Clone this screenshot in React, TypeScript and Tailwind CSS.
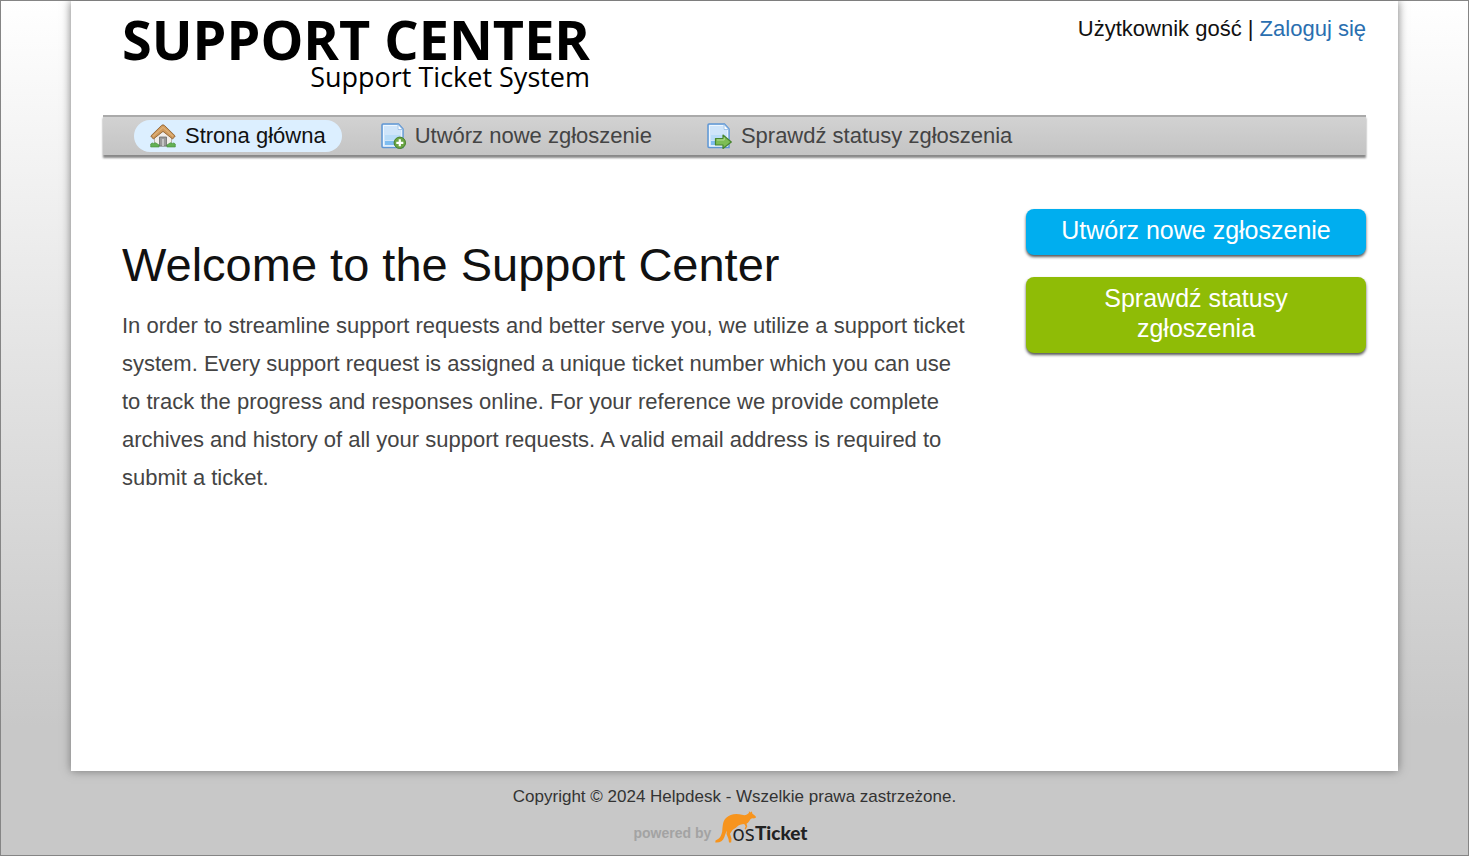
import type { ReactNode } from "react";

function IconHome() {
  return (
    <svg viewBox="0 0 26 24" className="h-6 w-[26px] shrink-0" aria-hidden="true">
      <path d="M4.500 11.500 13 4l8.500 7.500V22h-17z" fill="#f1eeea" stroke="#a9a39a" strokeWidth=".8" />
      <path d="M9.500 22v-9h7v9z" fill="#9a9a9a" stroke="#6c6c6c" strokeWidth=".8" />
      <path d="M12 22v-7h2v7z" fill="#c4c4c4" />
      <path d="M.8 12 11.600 1.400q1.400-1.100 2.800 0L25.200 12l-2.600 3L13 7.400 3.400 15z" fill="#cf9a5c" stroke="#8f6232" strokeWidth=".9" strokeLinejoin="round" />
      <path d="M3 12.200 13 3.200l10 9" fill="none" stroke="#dfb27a" strokeWidth="1.200" />
      <path d="M.7 23v-3q1.500-1.800 3-.6 1.700-1.400 3.400.3l2 1.300V23z" fill="#63b053" stroke="#3f8a38" strokeWidth=".6" />
      <path d="M25.300 23v-3q-1.500-1.800-3-.6-1.700-1.400-3.400.3l-2 1.300V23z" fill="#63b053" stroke="#3f8a38" strokeWidth=".6" />
    </svg>
  );
}

function Page({ children }: { children: ReactNode }) {
  return (
    <svg viewBox="0 0 25 26" className="h-[26px] w-[25px] shrink-0" aria-hidden="true">
      <path d="M2 1h15.500L22 6v18.500H2q-1 0-1-1V2q0-1 1-1z" fill="#cfe5fa" stroke="#5f96d4" strokeWidth="1.500" />
      <path d="M2.500 2.500H17V6.500h3.700V23H2.500z" fill="none" stroke="#eef7ff" strokeWidth="1" />
      <path d="M17 1.500V6.500h4.800z" fill="#fff" stroke="#8db7e3" strokeWidth=".8" />
      <path d="M4 12h15v5H4z" fill="#b9dcf8" />
      <path d="M4 18h15v4H4z" fill="#7fbdf0" />
      {children}
    </svg>
  );
}

function IconNew() {
  return (
    <Page>
      <circle cx="18.800" cy="19.800" r="5.700" fill="#6aa543" stroke="#47802b" strokeWidth="1" />
      <path d="M18.800 16.300v7M15.300 19.800h7" stroke="#fff" strokeWidth="2.200" />
    </Page>
  );
}

function IconStatus() {
  return (
    <Page>
      <path d="M8.500 15.500H16v-3.500l8.300 7-8.300 6.500V22H8.500z" fill="#7cbd55" stroke="#47852e" strokeWidth="1.200" strokeLinejoin="round" />
      <path d="M10 17h7.200v-2.500" fill="none" stroke="#b4dc95" strokeWidth="1" />
    </Page>
  );
}

function Kangaroo() {
  return (
    <svg viewBox="0 0 42 32" className="h-8 w-[42px]" aria-hidden="true">
      <path
        d="M.5 29.500C4.500 28 6.300 25 7.200 20.500 7.800 15 7.500 10.500 11 7 15 3 21 2 27 3.800c2.800.8 5.300.2 7-2L33.800.2l2 1.300 1-1.300.6 2.600c1.500.8 2.800 2 3.600 3.200-.3 1.400-1.900 1.600-3.400 1.300-1.600 0-2.400 1.200-3.100 2.500-.8 1.300-1.800 2.200-3 2.900l.8 2.600-1.500 3.300-1.200-.5 1-2.800-1.400-2.300c-2.600.2-5.500 1-7.200 2.700-1.400 1.500-3 2.400-4.500 3.300l-2.500 3.800 1.500 5-.3 3.700h-2.200l-.5-3.600-2-5 .4-3.400c-1.200 2.200-1.700 4.300-2.500 6.500-1.500 4-4.500 5.900-9.100 5.500z"
        fill="#f7941d"
      />
    </svg>
  );
}

const nav = [
  { label: "Strona główna", icon: <IconHome />, className: "rounded-full bg-[#dcefff] text-[#111]" },
  { label: "Utwórz nowe zgłoszenie", icon: <IconNew />, className: "text-[#444]" },
  { label: "Sprawdź statusy zgłoszenia", icon: <IconStatus />, className: "text-[#444]" },
];

function Header() {
  return (
    <header className="flex items-start justify-between pr-8 pl-[51px]">
      <a href="#" className="flex flex-col items-end pt-3 font-['Open_Sans',sans-serif] text-black">
        <span className="text-[54px] leading-[52px] font-bold">SUPPORT CENTER</span>
        <span className="text-[27px] leading-6">Support Ticket System</span>
      </a>
      <p className="pt-[13px] text-[22px] leading-[30px] text-[#111]">
        Użytkownik gość | <a href="#" className="text-[#2a6fb0]">Zaloguj się</a>
      </p>
    </header>
  );
}

function Navigation() {
  return (
    <nav className="mx-8 mt-[26px] border-t-2 border-[#aaa] bg-linear-to-b from-[#d2d2d2] to-[#c4c4c4] shadow-[0_3px_2px_#888]">
      <ul className="flex h-[38px] items-center gap-[23px] pl-[31px]">
        {nav.map((item) => (
          <li key={item.label}>
            <a
              href="#"
              className={`flex h-8 items-center gap-[9px] px-4 text-[22px] leading-8 ${item.className}`}
            >
              {item.icon}
              {item.label}
            </a>
          </li>
        ))}
      </ul>
    </nav>
  );
}

function Footer() {
  return (
    <footer className="flex flex-col items-center pt-4 pb-3">
      <p className="text-[17px] leading-5 text-[#333]">
        Copyright © 2024 Helpdesk - Wszelkie prawa zastrzeżone.
      </p>
      <a href="#" className="mr-7 flex h-9 items-end" aria-label="powered by osTicket">
        <span className="text-sm leading-5 font-bold text-[#a3a3a3]">powered by</span>
        <span className="relative ml-1 flex pl-[17px] text-[#222]">
          <span className="absolute bottom-0 left-0">
            <Kangaroo />
          </span>
          <span className="relative font-['Open_Sans',sans-serif] text-[21px] leading-5">os</span>
          <b className="relative font-['Lato',sans-serif] text-[19px] leading-5 font-black">Ticket</b>
        </span>
      </a>
    </footer>
  );
}

export default function App() {
  return (
    <div className="flex min-h-screen flex-col border border-[#858585] bg-linear-to-b from-white to-[#c8c8c8] to-85% font-['Liberation_Sans',Arial,sans-serif]">
      <div className="mx-[70px] flex-1 bg-white shadow-[0_0_9px_#777]">
        <Header />
        <Navigation />
        <main className="flex items-start justify-between pt-[54px] pr-8 pl-[51px]">
          <section className="max-w-[850px] pt-7">
            <h1 className="text-[47px] leading-14 text-[#111]">Welcome to the Support Center</h1>
            <p className="mt-[14px] text-[22px] leading-[38px] text-[#444]">
              In order to streamline support requests and better serve you, we utilize a support ticket
              system. Every support request is assigned a unique ticket number which you can use to track
              the progress and responses online. For your reference we provide complete archives and
              history of all your support requests. A valid email address is required to submit a ticket.
            </p>
          </section>
          <aside className="flex w-[340px] shrink-0 flex-col gap-[22px]">
            <button className="rounded-lg bg-[#00aeef] px-8 pt-[6px] pb-[10px] text-[25px] leading-[30px] text-white shadow-[0_2px_3px_#555]">
              Utwórz nowe zgłoszenie
            </button>
            <button className="rounded-lg bg-[#8fbc06] px-8 pt-[6px] pb-[10px] text-[25px] leading-[30px] text-white shadow-[0_2px_3px_#555]">
              Sprawdź statusy zgłoszenia
            </button>
          </aside>
        </main>
      </div>
      <Footer />
    </div>
  );
}
